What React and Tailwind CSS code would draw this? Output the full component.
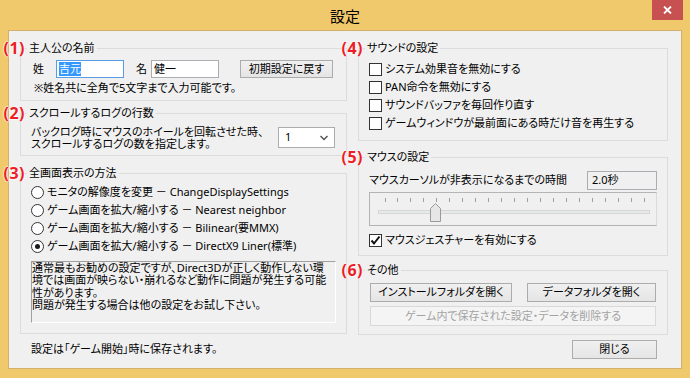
import React from "react";

const Red = ({ n }) => (
  <span className="absolute right-full top-1/2 mr-[2px] -translate-y-1/2 font-['Noto_Sans',sans-serif] text-[16px] font-bold leading-[18px] tracking-[0.5px] text-[#ee1c24] [text-shadow:0_0_1px_#fff,0_0_2px_#fff,0_0_2px_#fff]">
    ({n})
  </span>
);

const Group = ({ n, title, className, children }) => (
  <fieldset className={`min-w-0 border border-[#dcdcdc] ${className}`}>
    <legend className="relative ml-[6px] px-[2px] leading-[16px]">
      <Red n={n} />
      {title}
    </legend>
    {children}
  </fieldset>
);

const Button = ({ className, disabled, children }) => (
  <div
    className={`flex items-center justify-center border ${
      disabled
        ? "border-[#d9d9d9] bg-[#f4f4f4] text-[#a3a3a3]"
        : "border-[#acacac] bg-gradient-to-b from-[#f0f0f0] to-[#e5e5e5]"
    } ${className}`}
  >
    {children}
  </div>
);

const Radio = ({ checked, children }) => (
  <div className="flex h-[18px] items-center">
    <div className="flex h-[13px] w-[13px] items-center justify-center rounded-full border border-[#333] bg-white">
      {checked && <div className="h-[5px] w-[5px] rounded-full bg-[#1a1a1a]" />}
    </div>
    <span className="ml-[3px]">{children}</span>
  </div>
);

const Check = ({ checked, children }) => (
  <div className="flex h-[18px] items-center">
    <div className="flex h-[13px] w-[13px] items-center justify-center border border-[#333] bg-white">
      {checked && (
        <svg width="11" height="11" viewBox="0 0 11 11">
          <path d="M1.5 5.5 L4 8.5 L9.5 1.5" fill="none" stroke="#111" strokeWidth="2" />
        </svg>
      )}
    </div>
    <span className="ml-[3px]">{children}</span>
  </div>
);

const Slider = () => {
  const ticks = Array.from({ length: 21 }, (_, i) => 14.5 + i * 12.95);
  return (
    <div className="mt-[2px] h-[34px] w-[288px] border border-[#b4b4b4] border-r-[#dadada] bg-[#f0f0f0]">
      <svg width="286" height="32" viewBox="0 0 286 32">
        {ticks.map((x, i) => (
          <line key={i} x1={Math.round(x) + 0.5} y1="5" x2={Math.round(x) + 0.5} y2="9" stroke="#a0a0a0" />
        ))}
        <rect x="8.5" y="17.5" width="271" height="3" fill="#e7eaea" stroke="#d6d6d6" />
        <path d="M60.5 15.5 L65.5 10.5 L70.5 15.5 L70.5 28.5 L60.5 28.5 Z" fill="#e6e6e6" stroke="#9a9a9a" />
      </svg>
    </div>
  );
};

export default function App() {
  return (
    <div className="flex h-[378px] w-[690px] flex-col bg-[#f0c96c] font-['Noto_Sans','Noto_Sans_CJK_JP',sans-serif] text-[11px] text-black [font-feature-settings:'palt']">
      <div className="relative flex h-[30px] items-center justify-center pt-[2px] text-[15px]">
        設定
        <div className="absolute right-[7px] top-0 flex h-[20px] w-[31px] items-center justify-center bg-[#c75050]">
          <svg width="9" height="8" viewBox="0 0 9 8">
            <path d="M1 0.5 L8 7.5 M8 0.5 L1 7.5" stroke="#fff" strokeWidth="1.8" />
          </svg>
        </div>
      </div>

      <div className="mx-[8px] flex h-[339px] gap-[11px] border border-[#d2b26a] bg-[#f0f0f0] pl-[11px] pt-[9px]">
        {/* left column */}
        <div className="flex w-[327px] flex-col">
          <Group n={1} title="主人公の名前" className="h-[61px]">
            <div className="mt-[4px] flex h-[18px] items-center pl-[12px]">
              <span>姓</span>
              <div className="ml-[12px] flex h-[18px] w-[68px] items-center border border-[#569de5] bg-white pl-[2px]">
                <span className="bg-[#3399ff] leading-[14px] text-white">吉元</span>
              </div>
              <span className="ml-[12px]">名</span>
              <div className="ml-[4px] flex h-[18px] w-[68px] items-center border border-[#abadb3] bg-white pl-[2px]">
                健一
              </div>
              <Button className="ml-[21px] h-[18px] w-[93px]">初期設定に戻す</Button>
            </div>
            <div className="mt-[4px] pl-[13px] leading-[12px]">※姓名共に全角で5文字まで入力可能です。</div>
          </Group>

          <Group n={2} title="スクロールするログの行数" className="mt-[4px] h-[51px]">
            <div className="flex items-center pl-[10px] pr-[11px] pt-[5px]">
              <div className="whitespace-nowrap leading-[11.5px]">
                バックログ時にマウスのホイールを回転させた時、
                <br />
                スクロールするログの数を指定します。
              </div>
              <div className="ml-auto flex h-[21px] w-[57px] items-center justify-between border border-[#acacac] bg-white pl-[6px] pr-[6px]">
                <span>1</span>
                <svg width="8" height="6" viewBox="0 0 8 6">
                  <path d="M0.5 1 L4 4.5 L7.5 1" fill="none" stroke="#555" strokeWidth="1.5" />
                </svg>
              </div>
            </div>
          </Group>

          <Group n={3} title="全画面表示の方法" className="mt-[9px] h-[169px]">
            <div className="pl-[10px] pt-[2px]">
              <Radio>モニタの解像度を変更 － ChangeDisplaySettings</Radio>
              <Radio>ゲーム画面を拡大/縮小する － Nearest neighbor</Radio>
              <Radio>ゲーム画面を拡大/縮小する － Bilinear(要MMX)</Radio>
              <Radio checked>ゲーム画面を拡大/縮小する － DirectX9 Liner(標準)</Radio>
              <div className="mt-[6px] h-[62px] w-[305px] overflow-hidden whitespace-nowrap border border-[#a0a0a0] border-b-white border-r-white leading-[12.4px]">
                <div>通常最もお勧めの設定ですが、Direct3Dが正しく動作しない環</div>
                <div>境では画面が映らない・崩れるなど動作に問題が発生する可能</div>
                <div>性があります。</div>
                <div>問題が発生する場合は他の設定をお試し下さい。</div>
              </div>
            </div>
          </Group>

          <div className="mt-[9px] pl-[11px] leading-[12px]">設定は「ゲーム開始」時に保存されます。</div>
        </div>

        {/* right column */}
        <div className="flex w-[310px] flex-col">
          <Group n={4} title="サウンドの設定" className="h-[101px]">
            <div className="pl-[10px] pt-[4px]">
              <Check>システム効果音を無効にする</Check>
              <Check>PAN命令を無効にする</Check>
              <Check>サウンドバッファを毎回作り直す</Check>
              <Check>ゲームウィンドウが最前面にある時だけ音を再生する</Check>
            </div>
          </Group>

          <Group n={5} title="マウスの設定" className="mt-[8px] h-[107px]">
            <div className="pl-[10px] pr-[10px] pt-[6px]">
              <div className="flex h-[19px] items-center justify-between">
                <span>マウスカーソルが非表示になるまでの時間</span>
                <div className="flex h-[19px] w-[70px] items-center border border-[#abadb3] pl-[4px]">2.0秒</div>
              </div>
              <Slider />
              <div className="mt-[5px]">
                <Check checked>マウスジェスチャーを有効にする</Check>
              </div>
            </div>
          </Group>

          <Group n={6} title="その他" className="mt-[6px] h-[73px]">
            <div className="pl-[11px] pt-[5px]">
              <div className="flex">
                <Button className="h-[19px] w-[142px]">インストールフォルダを開く</Button>
                <Button className="ml-[15px] h-[19px] w-[129px]">データフォルダを開く</Button>
              </div>
              <Button disabled className="mt-[4px] h-[20px] w-[286px]">
                ゲーム内で保存された設定・データを削除する
              </Button>
            </div>
          </Group>

          <div className="mt-[5px] flex justify-end pr-[11px]">
            <Button className="h-[19px] w-[85px]">閉じる</Button>
          </div>
        </div>
      </div>
    </div>
  );
}
